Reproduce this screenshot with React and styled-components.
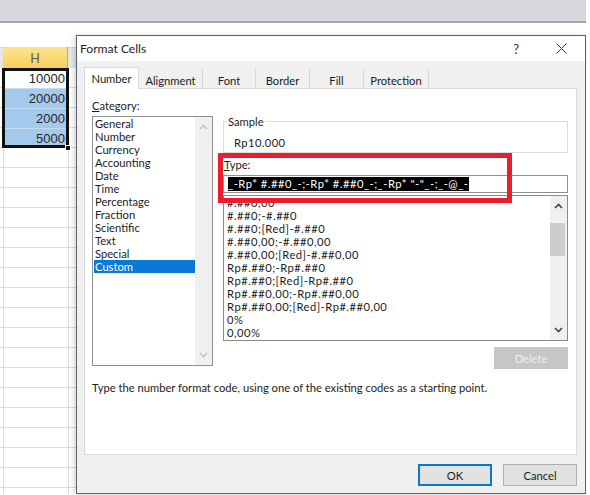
import React from "react";
import styled, { createGlobalStyle } from "styled-components";

const Global = createGlobalStyle`
  html, body { margin: 0; padding: 0; background: #fff; }
  body { font-family: Lato, Roboto, "Noto Sans", sans-serif; overflow: hidden; }
  * { box-sizing: border-box; }
`;

const Page = styled.div`
  position: relative;
  width: 590px;
  height: 495px;
  overflow: hidden;
  background: #fff;
`;
const Ribbon = styled.div`
  height: 23px;
  width: 586px;
  background: #d5d7dc;
  border-bottom: 2px solid #a3a5aa;
`;
const Sheet = styled.div`
  margin-top: 24px;
  width: 76px;
  display: grid;
  grid-template-columns: 3px 65px 8px;
`;
const HeaderGap = styled.div`
  height: 21px;
  background: #e6e6e6;
  border-top: 1px solid #d4d4d4;
`;
const HeaderCell = styled.div`
  height: 21px;
  background: linear-gradient(#fbe38c, #f8cf62);
  border-right: 1px solid #c9a850;
  color: #5a5a4a;
  font-size: 12.5px;
  padding-top: 1px;
  display: flex;
  align-items: center;
  justify-content: center;
`;
const Cells = styled.div`
  grid-column: 1 / 4;
  background: repeating-linear-gradient(
    to bottom,
    transparent 0,
    transparent 19px,
    #dcdcdc 19px,
    #dcdcdc 20px
  );
  position: relative;
  height: 426px;
  &::before {
    content: "";
    position: absolute;
    left: 68px;
    top: 0;
    bottom: 0;
    width: 1px;
    background: #d8d8d8;
  }
  &::after {
    content: "";
    position: absolute;
    left: 3px;
    top: 0;
    bottom: 0;
    width: 1px;
    background: #dcdcdc;
  }
`;
const Selection = styled.div`
  position: absolute;
  z-index: 2;
  left: 2px;
  top: 0;
  width: 67px;
  height: 80px;
  border: 3px solid #111;
  background: #fff;
  display: flex;
  flex-direction: column;
`;
const SheetCell = styled.div`
  height: 20px;
  flex: none;
  padding-right: 1px;
  background: ${(p) => (p.$on ? "#a3c9ec" : "#fff")};
  border-top: ${(p) => (p.$on ? "1px solid #c5dcf2" : "0")};
  color: #262626;
  font-size: 13px;
  line-height: 19px;
  text-align: right;
  font-family: "Liberation Sans", sans-serif;
  &:first-child {
    height: 17px;
    line-height: 15px;
  }
  &:last-child {
    height: 17px;
  }
`;
const Handle = styled.div`
  position: absolute;
  z-index: 3;
  left: 65px;
  top: 77px;
  width: 6px;
  height: 6px;
  background: #111;
  border: 1px solid #fff;
`;
const Dialog = styled.section`
  position: absolute;
  left: 76px;
  top: 35px;
  width: 510px;
  height: 459px;
  background: #f0f0f0;
  border: 1px solid #5d6165;
  box-shadow: -2px 0 5px rgba(0, 0, 0, 0.16);
  display: flex;
  flex-direction: column;
  color: #1c1c1c;
  font-size: 11.2px;
`;
const TitleBar = styled.header`
  height: 25px;
  flex: none;
  background: #fff;
  display: flex;
  align-items: center;
  padding: 0 18px 0 3px;
`;
const Title = styled.h1`
  margin: 0;
  flex: 1;
  font-size: 12.1px;
  font-weight: 400;
  color: #222;
`;
const Help = styled.span`
  font-size: 13px;
  margin-right: 37px;
  color: #333;
`;
const TabStrip = styled.nav`
  flex: none;
  display: flex;
  height: 28px;
  margin: 0 7px -1px;
  padding: 7px 0 0;
  position: relative;
  z-index: 1;
`;
const Tab = styled.div`
  width: ${(p) => p.$w}px;
  display: flex;
  align-items: center;
  justify-content: center;
  background: ${(p) => (p.$active ? "#fff" : "transparent")};
  border-right: 1px solid #d9d9d9;
  border-top: 1px solid ${(p) => (p.$active ? "#d9d9d9" : "#f0f0f0")};
  border-left: ${(p) => (p.$active ? "1px solid #d9d9d9" : "0")};
  margin-top: ${(p) => (p.$active ? "-1px" : "0")};
  height: ${(p) => (p.$active ? "22px" : "21px")};
  padding-top: ${(p) => (p.$active ? "0" : "2px")};
`;
const Panel = styled.main`
  position: relative;
  flex: none;
  margin: 0 7px;
  width: 493px;
  height: 367px;
  background: #fff;
  border: 1px solid #dadada;
  padding: 9px 7px 0 7px;
  display: grid;
  grid-template-columns: 121px 345px;
  column-gap: 10px;
  grid-template-rows: 274px auto;
`;
const LeftCol = styled.div`
  display: flex;
  flex-direction: column;
`;
const RightCol = styled.div`
  display: flex;
  flex-direction: column;
  padding-top: 23px;
`;
const Label = styled.label`
  display: block;
  height: 18px;
  line-height: 15px;
`;
const ListBox = styled.div`
  position: relative;
  flex: none;
  height: ${(p) => p.$h}px;
  border: 1px solid ${(p) => p.$line || "#8f8f8f"};
  padding: ${(p) => p.$top}px ${(p) => p.$right}px 0 ${(p) => p.$left}px;
  overflow: hidden;
  background: #fff;
`;
const Item = styled.div`
  height: 13px;
  line-height: 13px;
  white-space: nowrap;
  padding-left: 1px;
  letter-spacing: ${(p) => p.$track || 0}px;
  background: ${(p) => (p.$on ? "#0a78d7" : "transparent")};
  color: ${(p) => (p.$on ? "#fff" : "#1c1c1c")};
`;
const ScrollTrack = styled.div`
  position: absolute;
  top: 0;
  right: 0;
  bottom: 0;
  width: 17px;
  background: #f0f0f0;
  display: flex;
  flex-direction: column;
  justify-content: space-between;
  align-items: center;
  padding: 7px 0;
`;
const Thumb = styled.div`
  position: absolute;
  top: 27px;
  left: 0;
  width: 15px;
  height: 33px;
  background: #cdcdcd;
`;
const Sample = styled.fieldset`
  margin: 0;
  height: 32px;
  padding: 0;
  border: 1px solid #dcdcdc;
  position: relative;
  display: block;
`;
const SampleLegend = styled.span`
  position: absolute;
  left: 3px;
  top: -7px;
  background: #fff;
  padding: 0 1px;
  line-height: 13px;
`;
const SampleValue = styled.div`
  padding: 14px 0 0 10px;
  line-height: 14px;
  letter-spacing: 0.4px;
`;
const TypeLabel = styled(Label)`
  margin-top: 6px;
  height: 16px;
  padding-left: 1px;
  line-height: 12px;
`;
const TypeInput = styled.div`
  height: 18px;
  border: 1px solid #8f8f8f;
  padding: 1px 0 0 4px;
  margin-bottom: 2px;
  background: #fff;
`;
const Selected = styled.span`
  display: inline-block;
  height: 14px;
  line-height: 14px;
  background: #000;
  color: #fff;
  font-size: 11.2px;
  white-space: pre;
  letter-spacing: 0.5px;
`;
const DeleteRow = styled.div`
  display: flex;
  justify-content: flex-end;
  padding-top: 6px;
`;
const DeleteBtn = styled.div`
  width: 74px;
  height: 22px;
  background: #c6c6c6;
  color: #eeeeee;
  display: flex;
  align-items: center;
  justify-content: center;
`;
const Hint = styled.p`
  grid-column: 1 / 3;
  margin: 0;
  padding-top: 8px;
  line-height: 15px;
  white-space: nowrap;
`;
const Footer = styled.footer`
  display: flex;
  justify-content: flex-end;
  gap: 11px;
  padding: 9px 8px 0 0;
`;
const Btn = styled.button`
  width: 74px;
  height: 22px;
  padding: 0;
  font: inherit;
  color: #1c1c1c;
  background: #e1e1e1;
  border: ${(p) => (p.$primary ? "2px solid #0a78d0" : "1px solid #adadad")};
`;
const RedBox = styled.div`
  position: absolute;
  z-index: 4;
  left: 133px;
  top: 64px;
  width: 294px;
  height: 50px;
  border: 5px solid #ed1c2e;
`;

const Chevron = ({ up, color = "#555" }) => (
  <svg width="9" height="6" viewBox="0 0 9 6" fill="none">
    <path d={up ? "M1 5 L4.5 1.5 L8 5" : "M1 1 L4.5 4.5 L8 1"} stroke={color} strokeWidth="1.6" />
  </svg>
);
const Close = () => (
  <svg width="11" height="11" viewBox="0 0 11 11" fill="none">
    <path d="M0.5 0.5 L10.5 10.5 M10.5 0.5 L0.5 10.5" stroke="#333" strokeWidth="1" />
  </svg>
);

const tabs = [
  ["Number", 55, true],
  ["Alignment", 64],
  ["Font", 53],
  ["Border", 54],
  ["Fill", 54],
  ["Protection", 65],
];
const categories = ["General", "Number", "Currency", "Accounting", "Date", "Time", "Percentage", "Fraction", "Scientific", "Text", "Special", "Custom"];
const formats = [
  "#.##0,00",
  "#.##0;-#.##0",
  "#.##0;[Red]-#.##0",
  "#.##0,00;-#.##0,00",
  "#.##0,00;[Red]-#.##0,00",
  "Rp#.##0;-Rp#.##0",
  "Rp#.##0;[Red]-Rp#.##0",
  "Rp#.##0,00;-Rp#.##0,00",
  "Rp#.##0,00;[Red]-Rp#.##0,00",
  "0%",
  "0,00%",
];

export default function App() {
  return (
    <Page>
      <Global />
      <Ribbon />
      <Sheet>
        <HeaderGap />
        <HeaderCell>H</HeaderCell>
        <HeaderGap />
        <Cells>
          <Selection>
            <SheetCell>10000</SheetCell>
            <SheetCell $on>20000</SheetCell>
            <SheetCell $on>2000</SheetCell>
            <SheetCell $on>5000</SheetCell>
          </Selection>
          <Handle />
        </Cells>
      </Sheet>
      <Dialog>
        <TitleBar>
          <Title>Format Cells</Title>
          <Help>?</Help>
          <Close />
        </TitleBar>
        <TabStrip>
          {tabs.map(([t, w, a]) => (
            <Tab key={t} $w={w} $active={a}>{t}</Tab>
          ))}
        </TabStrip>
        <Panel>
          <LeftCol>
            <Label><u>C</u>ategory:</Label>
            <ListBox $h={250} $top={0} $right={17} $left={1}>
              {categories.map((c) => (
                <Item key={c} $on={c === "Custom"}>{c}</Item>
              ))}
              <ScrollTrack>
                <Chevron up color="#c4c4c4" />
                <Chevron color="#c4c4c4" />
              </ScrollTrack>
            </ListBox>
          </LeftCol>
          <RightCol>
            <Sample>
              <SampleLegend>Sample</SampleLegend>
              <SampleValue>Rp10.000</SampleValue>
            </Sample>
            <TypeLabel><u>T</u>ype:</TypeLabel>
            <TypeInput>
              <Selected>{'_-Rp* #.##0_-;-Rp* #.##0_-;_-Rp* "-"_-;_-@_-'}</Selected>
            </TypeInput>
            <ListBox $h={146} $line="#8a8a8a" $top={0} $right={18} $left={2}>
              {formats.map((f) => (
                <Item key={f} $track={0.48}>{f}</Item>
              ))}
              <ScrollTrack>
                <Chevron up color="#444" />
                <Thumb />
                <Chevron color="#444" />
              </ScrollTrack>
            </ListBox>
            <DeleteRow><DeleteBtn>Delete</DeleteBtn></DeleteRow>
          </RightCol>
          <Hint>Type the number format code, using one of the existing codes as a starting point.</Hint>
          <RedBox />
        </Panel>
        <Footer>
          <Btn $primary>OK</Btn>
          <Btn>Cancel</Btn>
        </Footer>
      </Dialog>
    </Page>
  );
}
